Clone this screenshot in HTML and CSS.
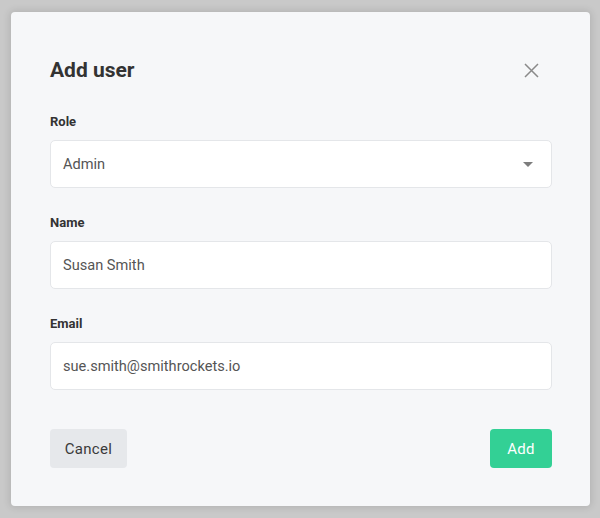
FILE: index.html
```html
<!DOCTYPE html>
<html lang="en">
<head>
<meta charset="utf-8">
<title>Add user</title>
<link rel="stylesheet" href="styles.css">
</head>
<body>
<div class="modal">
  <div class="modal-header">
    <h1 class="modal-title">Add user</h1>
    <button class="close-btn" aria-label="Close">
      <svg width="15" height="15" viewBox="0 0 15 15"><path d="M1 1L14 14M14 1L1 14" stroke="#8a8a8a" stroke-width="1.5" fill="none"/></svg>
    </button>
  </div>
  <div class="field first">
    <label class="field-label">Role</label>
    <div class="input select">
      <span>Admin</span>
      <svg class="caret" width="10" height="5" viewBox="0 0 10 5"><path d="M0 0H10L5 5Z" fill="#7d7d7d"/></svg>
    </div>
  </div>
  <div class="field">
    <label class="field-label">Name</label>
    <div class="input"><span>Susan Smith</span></div>
  </div>
  <div class="field">
    <label class="field-label">Email</label>
    <div class="input"><span>sue.smith@smithrockets.io</span></div>
  </div>
  <div class="actions">
    <button class="btn btn-cancel">Cancel</button>
    <button class="btn btn-add">Add</button>
  </div>
</div>
</body>
</html>
```
FILE: styles.css
```css
html, body {
  margin: 0;
  padding: 0;
}
body {
  background: #c9c9c9;
  width: 600px;
  height: 518px;
  overflow: hidden;
  font-family: Roboto, "Liberation Sans", sans-serif;
}
.modal {
  box-sizing: border-box;
  margin: 12px 0 0 11px;
  width: 579px;
  height: 494px;
  background: #f6f7f9;
  border-radius: 4px;
  box-shadow: 0 0 7px 2px rgba(0, 0, 0, 0.1);
  padding: 46px 38px 38px 39px;
  display: flex;
  flex-direction: column;
}
.modal-header {
  height: 25px;
  display: flex;
  align-items: center;
  justify-content: space-between;
}
.modal-title {
  margin: 0;
  font-size: 21px;
  font-weight: 700;
  color: #333;
  line-height: 25px;
}
.close-btn {
  border: 0;
  background: none;
  padding: 0;
  width: 15px;
  height: 15px;
  margin-right: 13px;
  display: flex;
}
.field {
  display: flex;
  flex-direction: column;
  gap: 10px;
  margin-top: 27px;
}
.field.first {
  margin-top: 31px;
}
.field-label {
  font-size: 13px;
  line-height: 16px;
  font-weight: 700;
  color: #333;
}
.input {
  box-sizing: border-box;
  height: 48px;
  background: #fff;
  border: 1px solid #e4e6e9;
  border-radius: 5px;
  padding: 0 18px 0 12px;
  display: flex;
  align-items: center;
  justify-content: space-between;
  font-size: 14.6px;
  color: #555;
}
.actions {
  margin-top: 39px;
  display: flex;
  justify-content: space-between;
}
.btn {
  height: 39px;
  border: 0;
  border-radius: 4px;
  font-family: Roboto, "Liberation Sans", sans-serif;
  font-size: 15px;
  font-weight: 400;
  letter-spacing: 0.3px;
  padding: 0;
}
.btn-cancel {
  background: #e6e8eb;
  color: #3a3a3a;
  width: 77px;
}
.btn-add {
  background: #33d095;
  color: #fff;
  width: 62px;
}
```
